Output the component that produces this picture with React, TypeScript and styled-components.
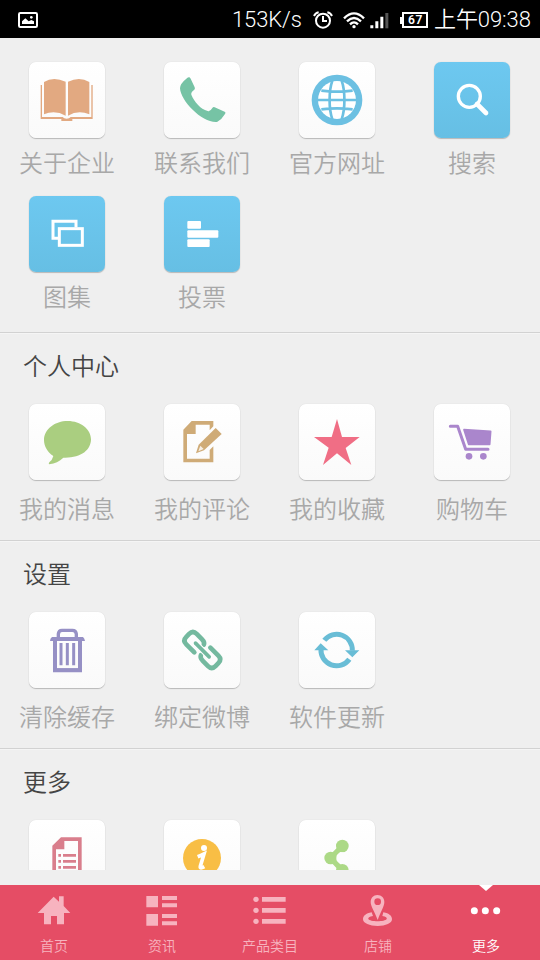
import React from 'react';
import styled, { createGlobalStyle } from 'styled-components';

const GlobalStyle = createGlobalStyle`
  html, body { margin: 0; padding: 0; background: #efefef; }
  * { box-sizing: border-box; }
  svg { display: block; }
`;

const Screen = styled.div`
  width: 540px;
  height: 960px;
  display: flex;
  flex-direction: column;
  overflow: hidden;
  background: #efefef;
  font-family: 'Noto Sans CJK SC', 'Noto Sans', sans-serif;
  font-weight: 350;
`;

/* ---------- status bar ---------- */

const StatusBar = styled.header`
  flex: none;
  height: 38px;
  display: flex;
  align-items: center;
  padding: 2px 9px 0 18px;
  background: #000;
  color: #fff;
`;

const StatusText = styled.span<{ $width: number }>`
  width: ${p => p.$width}px;
  font-family: Roboto, 'Noto Sans CJK SC', sans-serif;
  font-weight: 350;
  font-size: 22px;
  line-height: 24px;
  letter-spacing: -0.1px;
  white-space: nowrap;
`;

const StatusIcons = styled.div`
  display: flex;
  align-items: center;
  margin: 0 6px 0 12px;
`;

const StatusIcon = styled.svg<{ $gap?: number }>`
  margin-left: ${p => p.$gap ?? 0}px;
`;

const Spacer = styled.div`
  flex: 1;
`;

const Battery = styled.div`
  display: flex;
  align-items: center;
  margin-left: 11px;
`;

const BatteryTip = styled.div`
  width: 2px;
  height: 7px;
  background: #fff;
`;

const BatteryCell = styled.div`
  width: 26px;
  height: 16px;
  border: 2px solid #fff;
  color: #fff;
  font: 600 12px/12px Roboto, sans-serif;
  letter-spacing: 0.6px;
  text-indent: 1px;
  text-align: center;
`;

/* ---------- content ---------- */

const Content = styled.main`
  flex: none;
  height: 832px;
  overflow: hidden;
`;

const Section = styled.section<{ $height: number }>`
  height: ${p => p.$height}px;
  border-bottom: 1px solid #d2d2d2;
  box-shadow: 0 1px 0 #f5f5f5;
`;

const Heading = styled.h2`
  margin: 0;
  padding: 20px 0 27px 23px;
  height: 71px;
  font-size: 24px;
  line-height: 24px;
  font-weight: 350;
  color: #444;
`;

const Grid = styled.div<{ $top?: number }>`
  display: grid;
  grid-template-columns: repeat(4, 135px);
  grid-auto-rows: 134px;
  padding-top: ${p => p.$top ?? 0}px;
`;

const Cell = styled.div`
  display: flex;
  flex-direction: column;
  align-items: center;
  padding-right: 1px;
`;

const Tile = styled.div<{ $blue?: boolean }>`
  width: 76px;
  height: 76px;
  border-radius: 7px;
  background: ${p => (p.$blue ? 'linear-gradient(#6dc8f0, #66bfe4)' : 'linear-gradient(#ffffff, #fafafa)')};
  box-shadow: 0 1px 1px rgba(0, 0, 0, 0.22), 0 0 1px rgba(0, 0, 0, 0.16);
`;

const Label = styled.span<{ $gap: number }>`
  margin-top: ${p => p.$gap}px;
  font-size: 24px;
  line-height: 24px;
  color: #a8a8a8;
  white-space: nowrap;
`;

/* ---------- bottom navigation ---------- */

const NavBar = styled.nav`
  flex: none;
  height: 75px;
  margin-top: 15px;
  display: grid;
  grid-template-columns: repeat(5, 108px);
  background: #e54d65;
`;

const NavItem = styled.div<{ $active?: boolean }>`
  position: relative;
  display: flex;
  flex-direction: column;
  align-items: center;
  padding-top: 9px;
  color: ${p => (p.$active ? '#fff' : '#f7b3bf')};
`;

const NavLabel = styled.span`
  margin-top: 10px;
  font-size: 14px;
  line-height: 16px;
`;

const Notch = styled.i`
  position: absolute;
  top: 0;
  left: 47px;
  border: solid transparent;
  border-width: 6px 7px 0;
  border-top-color: #fff;
`;

/* ---------- icons: drawn on a 228-unit tile ---------- */

const Art = ({ children }: { children: React.ReactNode }) => (
  <svg width="76" height="76" viewBox="0 0 228 228">{children}</svg>
);

const Book = () => (
  <Art>
    <g fill="#e2a981">
      <path d="M45 60Q73 42 110 59V161Q78 143 45 157Z" />
      <path d="M117 59Q152 42 181 60V157Q148 143 117 161Z" />
      <path d="M35 69H39V165H101Q105 170 113 170Q121 170 125 165H187V69H191V171H130V177H97V171H35Z" />
    </g>
  </Art>
);

const Phone = () => (
  <Art>
    <path fill="#76c3a5" d="M75 46Q78 46 80 50L92 76Q94 80 91 83Q80 91 82 98C91 119 109 141 131 147Q138 150 145 138Q148 134 152 136L182 149Q187 152 183 156Q174 172 159 180C116 184 50 118 48 79Q48 65 67 50Q72 46 75 46Z" />
  </Art>
);

const Globe = () => (
  <Art>
    <circle cx="114" cy="114" r="76" fill="#6cc0e2" />
    <circle cx="114" cy="114" r="57" fill="#fff" />
    <g fill="none" stroke="#6cc0e2" strokeWidth="8">
      <path d="M100 56C89 88 89 140 100 172M128 56C139 88 139 140 128 172M57 114H171M67 86Q114 92 161 86M67 142Q114 136 161 142" />
    </g>
  </Art>
);

const Search = () => (
  <Art>
    <circle cx="106" cy="103" r="33" fill="none" stroke="#fff" strokeWidth="10" />
    <path d="M129 126L156 153" stroke="#fff" strokeWidth="14" strokeLinecap="round" />
  </Art>
);

const Gallery = () => (
  <Art>
    <g fill="none" stroke="#fff">
      <path strokeWidth="9" d="M87 127H72V76H141V94" />
      <rect strokeWidth="9" x="91" y="98" width="69" height="50" />
    </g>
  </Art>
);

const Vote = () => (
  <Art>
    <g fill="#fff">
      <rect x="70" y="75" width="41" height="23" rx="3" />
      <rect x="70" y="103" width="93" height="22" rx="3" />
      <rect x="70" y="130" width="67" height="23" rx="3" />
    </g>
  </Art>
);

const Message = () => (
  <Art>
    <path fill="#aace80" d="M116 51C156 51 186 76 186 106C186 139 155 163 103 161C91 172 78 179 61 181Q57 178 61 175Q70 168 73 156C55 144 45 126 45 108C45 75 78 51 116 51Z" />
  </Art>
);

const Review = () => (
  <Art>
    <g fill="#cfab77">
      <path fillRule="evenodd" d="M83 51H148V67L137 79V62H95V90H69V164H137V138L148 127V175H58V77Z" />
      <path d="M155 72L173 90L120 139L96 148L104 122Z" />
    </g>
    <path d="M109 125L119 135L103 142Z" fill="#fff" opacity=".8" />
  </Art>
);

const Star = () => (
  <Art>
    <path fill="#f06e85" d="M114 45L129 99H182L140 132L157 183L114 148L72 183L89 131L45 99H98Z" />
  </Art>
);

const Cart = () => (
  <Art>
    <path d="M49 67H71L95 136H162" fill="none" stroke="#aa86cc" strokeWidth="9" strokeLinecap="round" strokeLinejoin="round" />
    <path d="M90 77L170 82L167 121H104Z" fill="#aa86cc" stroke="#aa86cc" strokeWidth="5" strokeLinejoin="round" />
    <circle cx="105" cy="157" r="10" fill="#aa86cc" />
    <circle cx="148" cy="157" r="10" fill="#aa86cc" />
  </Art>
);

const Trash = () => (
  <Art>
    <g fill="none" stroke="#9690c5">
      <path strokeWidth="10" d="M88 77V66Q89 55 99 55H130Q141 55 142 66V77" />
      <path strokeWidth="12" d="M78 84V175H153V84" />
      <path strokeWidth="6" d="M78 172H153" />
      <path strokeWidth="9" d="M96 93V160M115 93V160M134 93V160" />
    </g>
    <path fill="#9690c5" d="M69 75H162Q167 80 168 87H63Q63 80 69 75Z" />
  </Art>
);

const Chain = () => (
  <Art>
    <g transform="translate(115 114) rotate(45)" fill="none" stroke="#74b99f" strokeLinecap="round">
      <path strokeWidth="14" d="M-12 22H-46Q-62 22 -62 6V-6Q-62 -22 -46 -22H-24Q-11 -22 -8 -14" />
      <path strokeWidth="14" d="M12 -22H46Q62 -22 62 -6V6Q62 22 46 22H24Q11 22 8 14" />
      <path strokeWidth="18" stroke="#fff" d="M-28 0H28" />
      <path strokeWidth="11" d="M-29 0H29" />
    </g>
  </Art>
);

const Refresh = () => (
  <Art>
    <g fill="none" stroke="#69bdd6" strokeWidth="15">
      <path d="M76 85A47 47 0 0 1 160 116" />
      <path d="M151 142A47 47 0 0 1 66 111" />
    </g>
    <path fill="#69bdd6" d="M138 115H181L160 136ZM46 115H88L65 94Z" />
  </Art>
);

const Article = () => (
  <Art>
    <g fill="#d97e8c">
      <path fillRule="evenodd" d="M96 52H158V178H70V77ZM106 63V88H81V167H147V63Z" />
      <path d="M88 102h8v8h-8zM102 102h39v8h-39zM88 120h8v8h-8zM102 120h39v8h-39zM88 138h8v8h-8zM102 138h39v8h-39z" />
    </g>
  </Art>
);

const Info = () => (
  <Art>
    <circle cx="114" cy="114" r="57" fill="#f8be45" />
    <circle cx="120" cy="84" r="9" fill="#fff" />
    <path d="M101 110Q114 105 120 102L109 139Q107 148 121 140" fill="none" stroke="#fff" strokeWidth="11" />
  </Art>
);

const Share = () => (
  <Art>
    <path d="M130 78L95 114L130 151" fill="none" stroke="#acd986" strokeWidth="16" />
    <circle cx="130" cy="78" r="19" fill="#acd986" />
    <circle cx="95" cy="114" r="19" fill="#acd986" />
    <circle cx="130" cy="151" r="19" fill="#acd986" />
    <circle cx="129" cy="114" r="17" fill="#fdfdfd" />
  </Art>
);

/* ---------- navigation icons: 3 units per pixel ---------- */

const NavArt = ({ children }: { children: React.ReactNode }) => (
  <svg width="36" height="33" viewBox="0 0 108 99" fill="currentColor">{children}</svg>
);

const HomeIcon = () => (
  <NavArt>
    <path d="M53 8L69 23V7H83V36L103 57H84V91H63V66H45V91H24V57H5Z" />
  </NavArt>
);

const NewsIcon = () => (
  <NavArt>
    <path d="M7 6h35v34h-35zM54 6h45v12h-45zM54 28h45v12h-45zM7 60h35v35h-35zM54 60h45v12h-45zM54 82h45v12h-45z" />
  </NavArt>
);

const ListIcon = () => (
  <NavArt>
    <circle cx="12" cy="16" r="8" />
    <circle cx="12" cy="49" r="8" />
    <circle cx="12" cy="82" r="8" />
    <path d="M30 9h71v14h-71zM30 42h71v14h-71zM30 75h71v14h-71z" />
  </NavArt>
);

const StoreIcon = () => (
  <NavArt>
    <path fillRule="evenodd" d="M52 3C65 3 73 12 73 24C73 38 62 52 53 78C44 52 32 38 32 24C32 12 40 3 52 3ZM53 13A10 10 0 1 0 53 33A10 10 0 1 0 53 13Z" />
    <path d="M35 55C17 58 9 66 9 76C9 88 29 96 53 96C77 96 96 88 96 76C96 66 88 58 70 55L67 66C78 68 82 72 80 75C76 84 29 84 25 75C23 72 28 68 39 66Z" />
  </NavArt>
);

const DotsIcon = () => (
  <NavArt>
    <circle cx="19" cy="50" r="10.5" />
    <circle cx="52" cy="50" r="10.5" />
    <circle cx="86" cy="50" r="10.5" />
  </NavArt>
);

/* ---------- data ---------- */

type Entry = { label: string; icon: React.ReactNode; blue?: boolean };

const shortcuts: Entry[] = [
  { label: '关于企业', icon: <Book /> },
  { label: '联系我们', icon: <Phone /> },
  { label: '官方网址', icon: <Globe /> },
  { label: '搜索', icon: <Search />, blue: true },
  { label: '图集', icon: <Gallery />, blue: true },
  { label: '投票', icon: <Vote />, blue: true },
];

const groups: { title: string; entries: Entry[] }[] = [
  {
    title: '个人中心',
    entries: [
      { label: '我的消息', icon: <Message /> },
      { label: '我的评论', icon: <Review /> },
      { label: '我的收藏', icon: <Star /> },
      { label: '购物车', icon: <Cart /> },
    ],
  },
  {
    title: '设置',
    entries: [
      { label: '清除缓存', icon: <Trash /> },
      { label: '绑定微博', icon: <Chain /> },
      { label: '软件更新', icon: <Refresh /> },
    ],
  },
  {
    title: '更多',
    entries: [
      { label: '', icon: <Article /> },
      { label: '', icon: <Info /> },
      { label: '', icon: <Share /> },
    ],
  },
];

const tabs = [
  { label: '首页', icon: <HomeIcon /> },
  { label: '资讯', icon: <NewsIcon /> },
  { label: '产品类目', icon: <ListIcon /> },
  { label: '店铺', icon: <StoreIcon /> },
  { label: '更多', icon: <DotsIcon />, active: true },
];

const Entries = ({ items, gap, top }: { items: Entry[]; gap: number; top?: number }) => (
  <Grid $top={top}>
    {items.map((item, i) => (
      <Cell key={i}>
        <Tile $blue={item.blue}>{item.icon}</Tile>
        {item.label && <Label $gap={gap}>{item.label}</Label>}
      </Cell>
    ))}
  </Grid>
);

export default function App() {
  return (
    <Screen>
      <GlobalStyle />
      <StatusBar>
        <svg width="20" height="16" viewBox="0 0 60 48">
          <rect x="3" y="3" width="54" height="42" rx="4" fill="none" stroke="#fff" strokeWidth="6" />
          <path d="M12 36V28L22 19L32 28L40 24L48 28V36Z" fill="#fff" />
          <circle cx="40" cy="16" r="4" fill="#fff" />
        </svg>
        <Spacer />
        <StatusText $width={69}>153K/s</StatusText>
        <StatusIcons>
          <StatusIcon width="20" height="18" viewBox="0 0 60 54">
            <g fill="none" stroke="#fff" strokeWidth="6">
              <circle cx="30" cy="29" r="21" />
              <path d="M30 15V30H42M3 15Q7 6 17 4M57 15Q53 6 43 4" />
            </g>
          </StatusIcon>
          <StatusIcon $gap={10} width="22" height="17" viewBox="0 0 66 51">
            <g fill="none" stroke="#fff" strokeWidth="7">
              <path d="M3 19Q33 -11 63 19M12 28Q33 8 54 28M21 37Q33 25 45 37" />
            </g>
            <circle cx="33" cy="44" r="5" fill="#fff" />
          </StatusIcon>
          <StatusIcon $gap={5} width="19" height="17" viewBox="0 0 57 51">
            <path d="M1 40h9v9h-9zM16 28h9v21h-9zM31 14h9v35h-9z" fill="#fff" />
            <path d="M46 3h9v46h-9z" fill="#555" />
          </StatusIcon>
          <Battery>
            <BatteryTip />
            <BatteryCell>67</BatteryCell>
          </Battery>
        </StatusIcons>
        <StatusText $width={97}>上午09:38</StatusText>
      </StatusBar>

      <Content>
        <Section $height={295}>
          <Entries items={shortcuts} gap={12} top={24} />
        </Section>
        {groups.map(group => (
          <Section key={group.title} $height={208}>
            <Heading>{group.title}</Heading>
            <Entries items={group.entries} gap={16} />
          </Section>
        ))}
      </Content>

      <NavBar>
        {tabs.map(tab => (
          <NavItem key={tab.label} $active={tab.active}>
            {tab.active && <Notch />}
            {tab.icon}
            <NavLabel>{tab.label}</NavLabel>
          </NavItem>
        ))}
      </NavBar>
    </Screen>
  );
}
